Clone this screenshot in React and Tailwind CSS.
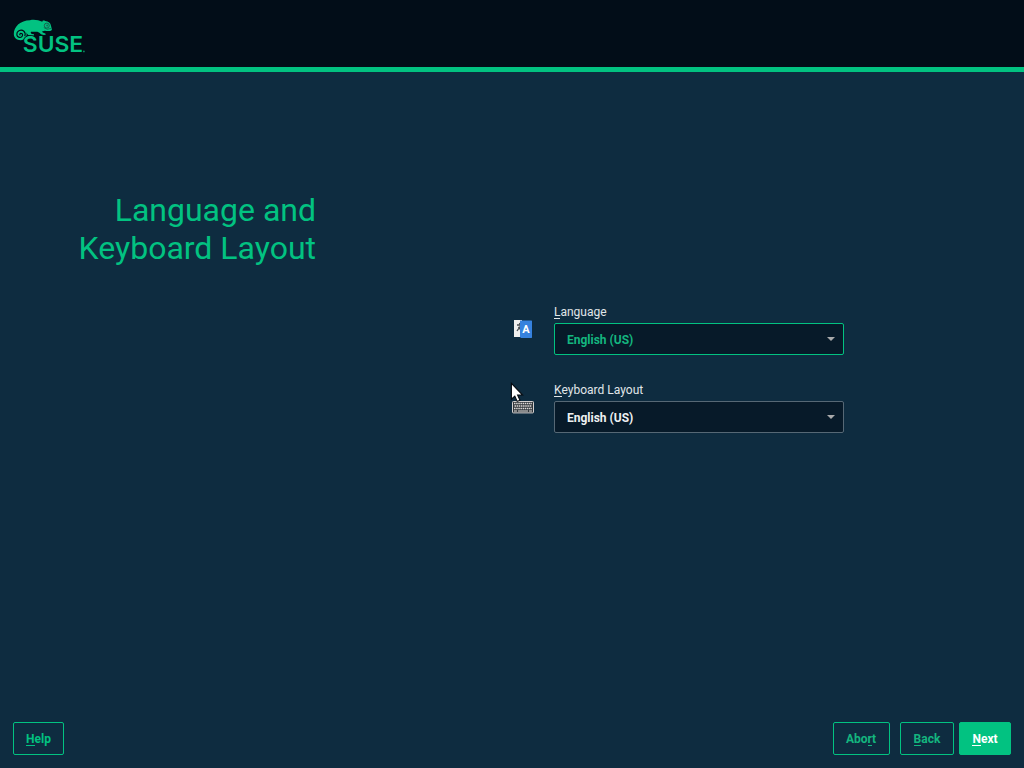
import React from "react";

function SuseLogo() {
  return (
    <svg className="ml-3 mt-4 block" width="76" height="40" viewBox="12 16 76 40" aria-label="SUSE">
      <path
        fill="#02c281"
        d="M13.8 34C13.8 26.5 20.5 20.3 30 20.2C34 19.3 38.5 20 42.4 21.8C42.2 20.4 43.6 20.2 45.2 20.9C48.6 21.4 50.6 22.8 50.9 25.4L51.9 29.4C51.7 31 48.9 31.3 44.8 30.7L42 31.4C42.6 33 45.4 32.8 46 34.2C45 35.6 41.5 35.2 39.4 32.8L37.4 31.8L31 31.8C30.2 33.2 31 34 34 34.2L34 35.6C29.5 36.2 27.8 35.4 26.4 32.6C27.4 36.8 25.2 40.2 20.6 40.2C16.7 40.2 13.8 37.6 13.8 34Z"
      />
      <path
        d="M24.8 36.2C26.4 32 22.6 29.2 19.4 30.4C16 31.8 16 36.6 19.4 37.4C22.2 38 23.6 34.6 21.6 33.6C20 32.9 19 34.8 20.4 35.2"
        fill="none"
        stroke="#020d18"
        strokeWidth="1.1"
      />
      <circle cx="46.8" cy="25.6" r="2.5" fill="none" stroke="#1c5f50" strokeWidth="1" />
      <circle cx="47.2" cy="25.6" r="1" fill="#087a59" />
      <path d="M43.8 27.6Q47 30.6 51 28.4" fill="none" stroke="#045c45" strokeWidth=".7" />
      <text
        x="22.8"
        y="52.2"
        textLength="60.4"
        lengthAdjust="spacingAndGlyphs"
        className="font-['Inter',sans-serif] text-[21.5px] font-semibold"
        fill="#02c281"
        stroke="#020d18"
        strokeWidth="1.6"
        paintOrder="stroke"
      >
        SUSE
      </text>
      <circle cx="83.9" cy="51.4" r=".9" fill="#078d65" />
    </svg>
  );
}

function LanguageIcon() {
  return (
    <svg width="18" height="18" viewBox="0 0 18 18" className="mt-[14px] block">
      <path d="M0 0H8V17H0Z" fill="#efefee" />
      <path d="M3 5H7M5.4 3L6.4 5M6.8 5.5L3 11M4.4 7L6.5 9.5" stroke="#454b50" strokeWidth="1.3" fill="none" />
      <path d="M6 .5H17.5L18 1V17.5L17.5 18H7L6 17Z" fill="#3682de" />
      <text x="8.2" y="13" className="font-['Roboto',sans-serif] text-[11px] font-bold" fill="#fff">A</text>
    </svg>
  );
}

function KeyboardIcon() {
  return (
    <svg width="22" height="13" viewBox="0 0 22 13" className="mt-[17px] block">
      <rect x=".5" y=".5" width="21" height="11.4" rx=".8" fill="#30363b" stroke="#d3d0cf" strokeWidth="1" />
      <path d="M2 2.5H20M2.5 5H20M2 7.5H20" stroke="#dedbd9" strokeWidth="1.4" strokeDasharray="1.5 .65" />
      <path d="M2 10H5M6 10H16M17 10H20" stroke="#dedbd9" strokeWidth="1.2" />
    </svg>
  );
}

function Cursor() {
  return (
    <svg width="14" height="22" viewBox="0 0 14 22" className="absolute left-[510px] top-[382px]">
      <path d="M1.4 1.3V17.2L4.8 14.1L7.2 19.4L10 18.2L7.6 13H12.6Z" fill="#fff" stroke="#050a10" strokeWidth="1.1" />
    </svg>
  );
}

function Mnemonic({ children }) {
  return <span className="relative inline-block after:absolute after:inset-x-0 after:bottom-0 after:h-px after:bg-current">{children}</span>;
}

function Field({ icon, letter, rest, focused }) {
  return (
    <div className="flex h-[78px] items-start">
      <div className="flex w-[42px] shrink-0 justify-start">{icon}</div>
      <div className="-mt-px w-[290px]">
        <div className="h-[18px] text-[12px] leading-[14px] text-[#e0e6e9]">
          <Mnemonic>{letter}</Mnemonic>{rest}
        </div>
        <button
          className={
            "flex h-8 w-full items-center justify-between rounded-[2px] border bg-[#071a29] pl-3 pr-2 text-[12px] font-bold " +
            (focused ? "border-[#02c281] text-[#14b67f]" : "border-[#566875] text-[#eef1f2]")
          }
        >
          <span className="pt-[2px]">English (US)</span>
          <svg width="8" height="4" viewBox="0 0 8 4"><path d="M0 0H8L4 4Z" fill="#a9aaab" /></svg>
        </button>
      </div>
    </div>
  );
}

function Button({ className, children }) {
  return (
    <button className={"h-[33px] rounded-[2px] border border-[#02c281] text-[12px] leading-[14px] font-bold " + className}>
      {children}
    </button>
  );
}

export default function App() {
  return (
    <div className="relative flex h-[768px] w-[1024px] flex-col overflow-hidden bg-[#0e2c40] font-['Roboto',sans-serif]">
      <header className="h-[72px] shrink-0 overflow-hidden border-b-[5px] border-[#02c281] bg-[#020d18]">
        <SuseLogo />
      </header>
      <main className="flex flex-1">
        <h1 className="w-[316px] pt-[119px] text-right text-[32px] leading-[38px] text-[#02c281]">
          Language and<br />Keyboard Layout
        </h1>
        <div className="ml-[196px] pt-[234px]">
          <Field icon={<div className="pl-[2px]"><LanguageIcon /></div>} letter="L" rest="anguage" focused />
          <Field icon={<KeyboardIcon />} letter="K" rest="eyboard Layout" />
        </div>
      </main>
      <footer className="flex h-[46px] shrink-0 items-start pl-[13px] pr-[13px]">
        <Button className="w-[51px] text-[#02c281]"><Mnemonic>H</Mnemonic>elp</Button>
        <Button className="ml-auto w-[57px] pr-px text-[#14b67f]">Abo<Mnemonic>r</Mnemonic>t</Button>
        <Button className="ml-[10px] w-[54px] text-[#14b67f]"><Mnemonic>B</Mnemonic>ack</Button>
        <Button className="ml-[5px] w-[52px] bg-[#02c281] text-white"><Mnemonic>N</Mnemonic>ext</Button>
      </footer>
      <Cursor />
    </div>
  );
}
